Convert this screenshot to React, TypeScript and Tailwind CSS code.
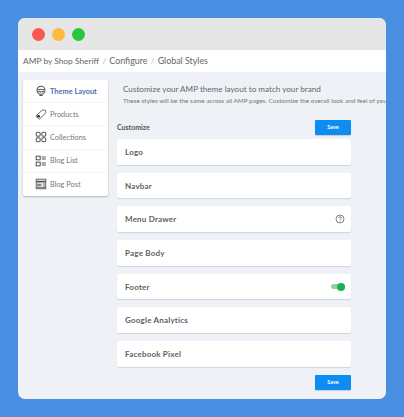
import React from "react";

const font = { fontFamily: "Lato, sans-serif" };

function ThemeIcon() {
  return (
    <svg width="12" height="12" viewBox="0 0 15 15" fill="none" stroke="#555" strokeWidth="1.300">
      <circle cx="7.500" cy="6.500" r="5" />
      <path d="M3 5.500c2 1.500 3.500-1 5 0s2.500.5 4-.5M3.500 8.500c2-1 3 .5 4.500 0s2.500-.5 3.500 0" />
      <path d="M5.500 13h4" strokeWidth="1.800" />
    </svg>
  );
}

function TagIcon() {
  return (
    <svg width="12" height="12" viewBox="0 0 15 15" fill="none" stroke="#555" strokeWidth="1.100">
      <path d="M1.500 9.500 8.500 3.200c.5-.4 1-.5 1.500-.5h2.500c.5 0 .8.400.8.800v2c0 .5-.2 1-.6 1.400L6 13.500c-.4.300-1 .3-1.400 0L1.500 10.800c-.3-.4-.3-1 0-1.300Z" />
      <circle cx="4.500" cy="10.300" r="1.700" fill="#222" stroke="none" />
    </svg>
  );
}

function GridIcon() {
  return (
    <svg width="12" height="12" viewBox="0 0 15 15" fill="none" stroke="#555" strokeWidth="1.300">
      <rect x="1.500" y="1.500" width="5" height="5" rx="1.800" />
      <rect x="8.500" y="1.500" width="5" height="5" rx="1.800" />
      <rect x="1.500" y="8.500" width="5" height="5" rx="1.800" />
      <rect x="8.500" y="8.500" width="5" height="5" rx="1.800" />
    </svg>
  );
}

function ListIcon() {
  return (
    <svg width="12" height="12" viewBox="0 0 15 15" fill="none" stroke="#555" strokeWidth="1.300">
      <rect x="1.500" y="1.500" width="5" height="4.500" />
      <rect x="1.500" y="9" width="5" height="4.500" />
      <path d="M8.500 2.500h5M8.500 5h5M8.500 10h5M8.500 12.500h5" />
    </svg>
  );
}

function PostIcon() {
  return (
    <svg width="12" height="12" viewBox="0 0 15 15" fill="none" stroke="#555" strokeWidth="1.100">
      <rect x="1.500" y="1.500" width="12" height="12" />
      <path d="M1.500 4.500h12" strokeWidth="2" />
      <rect x="2" y="7" width="6" height="3.500" fill="#888" stroke="none" />
      <path d="M9.500 7.500h3.500M9.500 10h3.500M2 12h11" />
    </svg>
  );
}

function HelpIcon() {
  return (
    <svg width="10" height="10" viewBox="0 0 10 10" fill="none" stroke="#777" strokeWidth="0.900">
      <circle cx="5" cy="5" r="4" />
      <path d="M3.700 4c0-.8.600-1.300 1.300-1.300s1.300.5 1.300 1.200c0 1-1.300 1-1.300 2" />
      <circle cx="5" cy="7.200" r="0.500" fill="#777" stroke="none" />
    </svg>
  );
}

const navItems = [
  { label: "Theme Layout", icon: <ThemeIcon />, active: true },
  { label: "Products", icon: <TagIcon /> },
  { label: "Collections", icon: <GridIcon /> },
  { label: "Blog List", icon: <ListIcon /> },
  { label: "Blog Post", icon: <PostIcon /> },
];

const cards = ["Logo", "Navbar", "Menu Drawer", "Page Body", "Footer", "Google Analytics", "Facebook Pixel"];

function SaveButton() {
  return (
    <button className="flex h-[15px] w-[36px] items-center justify-center rounded-[1px] bg-[#0d8df2] text-[5.500px] font-bold text-white shadow-[0_1px_1px_rgba(0,0,0,0.15)]">
      Save
    </button>
  );
}

export default function App() {
  return (
    <div className="h-[417px] w-[404px] bg-[#4a8ee2] pl-[18px] pt-[18px]" style={font}>
      <div className="flex h-[381px] w-[368px] flex-col overflow-hidden rounded-[7px] bg-[#eef1f6]">
        <div className="flex h-[32px] items-center gap-[7px] bg-[#e6e6e6] pl-[13.500px]">
          <span className="h-[13px] w-[13px] rounded-full bg-[#fc5753]" />
          <span className="h-[13px] w-[13px] rounded-full bg-[#fdbc40]" />
          <span className="h-[13px] w-[13px] rounded-full bg-[#27c840]" />
        </div>

        <div className="flex h-[22px] items-center whitespace-nowrap bg-white pl-[5px] text-[8.900px] text-[#666]">
          <span className="text-[8.400px]">AMP by Shop Sheriff</span>
          <span className="mx-[3.500px] text-[7px] text-[#aaa]">/</span>
          <span>Configure</span>
          <span className="mx-[3.500px] text-[7px] text-[#aaa]">/</span>
          <span>Global Styles</span>
        </div>

        <div className="flex flex-1 pl-[5px] pt-[8px]">
          <div className="h-[116px] w-[85px] shrink-0 rounded-[2px] bg-white shadow-[0_1px_2px_rgba(0,0,0,0.25)]">
            {navItems.map((item) => (
              <div key={item.label} className="flex h-[23.200px] items-center border-b border-[#f6f6f6] pl-[12px] last:border-b-0">
                <span className="w-[15px] shrink-0">{item.icon}</span>
                <span className={`whitespace-nowrap text-[7.400px] ${item.active ? "font-bold text-[#4a6fa8]" : "text-[#777]"}`}>
                  {item.label}
                </span>
              </div>
            ))}
          </div>

          <div className="ml-[9px] flex w-[234px] shrink-0 flex-col">
            <div className="ml-[6px] mt-[3px] w-[300px] whitespace-nowrap">
              <p className="text-[8.150px] leading-[12px] text-[#666]">Customize your AMP theme layout to match your brand</p>
              <p className="mt-[2px] text-[6.450px] leading-[8px] text-[#777]">
                These styles will be the same across all AMP pages. Customize the overall look and feel of your
              </p>
            </div>

            <div className="mt-[15px] flex h-[15px] items-center justify-between">
              <span className="text-[7px] font-bold text-[#555]">Customize</span>
              <SaveButton />
            </div>

            <div className="mt-[4px] flex flex-col gap-[8px]">
              {cards.map((card) => (
                <div key={card} className="flex h-[25.700px] items-center justify-between rounded-[2px] bg-white pl-[8px] pr-[6px] shadow-[0_1px_1px_rgba(0,0,0,0.12)]">
                  <span className="text-[8px] font-bold tracking-[0.2px] text-[#5f5f5f]">{card}</span>
                  {card === "Menu Drawer" && <HelpIcon />}
                  {card === "Footer" && (
                    <span className="relative h-[5px] w-[14px] rounded-full bg-[#8fd3a5]">
                      <span className="absolute right-0 top-[-1.500px] h-[8px] w-[8px] rounded-full bg-[#1eb04f]" />
                    </span>
                  )}
                </div>
              ))}
            </div>

            <div className="mt-[8px] flex justify-end">
              <SaveButton />
            </div>
          </div>
        </div>
      </div>
    </div>
  );
}
